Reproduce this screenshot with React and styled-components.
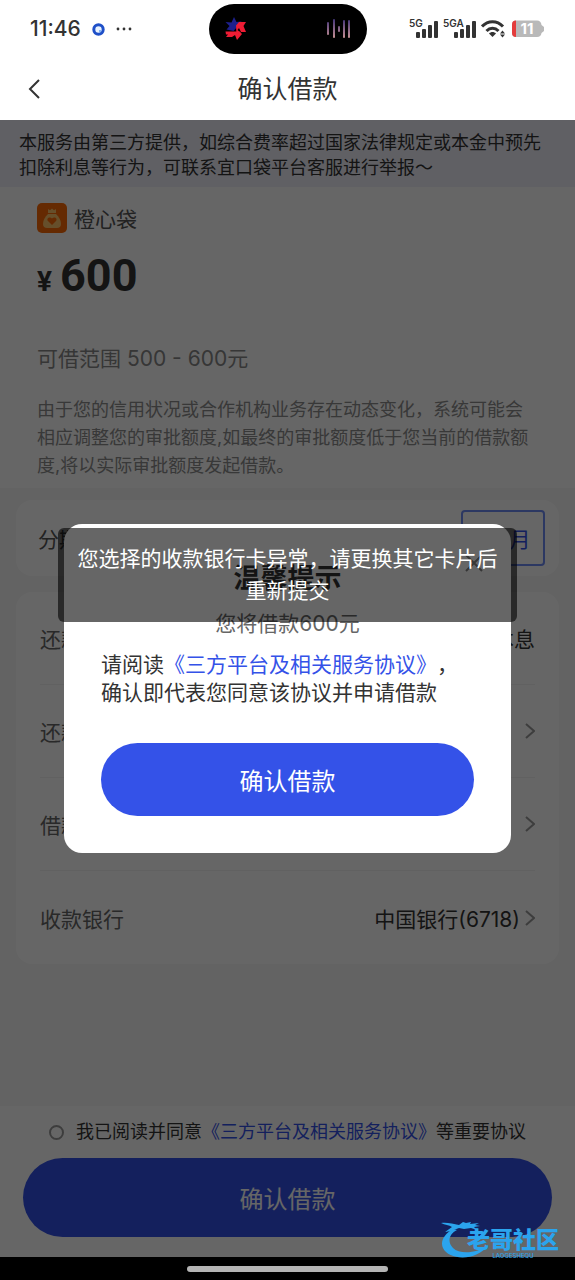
import React from 'react';
import styled, { createGlobalStyle } from 'styled-components';

const GlobalStyle = createGlobalStyle`
  *, *::before, *::after { box-sizing: border-box; }
  body {
    margin: 0;
    background: #fff;
    color: #333;
    font-family: Inter, "Noto Sans CJK SC", sans-serif;
    font-size: 21px;
    text-spacing-trim: space-all;
  }
  button, input { font: inherit; margin: 0; }
  h1, h2, p { margin: 0; }
  svg { display: block; flex: none; }
`;

const Screen = styled.div`
  position: relative;
  min-height: 100vh;
  display: flex;
  flex-direction: column;
`;

const StatusBar = styled.div`
  height: 58px;
  padding: 0 30px;
  display: grid;
  grid-template-columns: 1fr auto 1fr;
  align-items: center;
`;

const StatusLeft = styled.div`
  display: flex;
  align-items: center;
  gap: 11px;
`;

const Time = styled.span`
  font-size: 21px;
  line-height: 28px;
  font-weight: 500;
`;

const StatusRight = styled.div`
  display: flex;
  align-items: center;
  justify-content: flex-end;
  gap: 5px;
`;

const Island = styled.div`
  width: 158px;
  height: 50px;
  padding: 0 15px;
  border-radius: 25px;
  background: #000;
  display: flex;
  align-items: center;
  justify-content: space-between;
`;

const TitleBar = styled.header`
  height: 62px;
  padding: 0 24px;
  display: grid;
  grid-template-columns: 48px 1fr 48px;
  align-items: center;
`;

const IconButton = styled.button`
  padding: 0;
  border: 0;
  background: none;
  display: flex;
  color: #333;
`;

const PageTitle = styled.h1`
  font-size: 25px;
  line-height: 36px;
  font-weight: 400;
  text-align: center;
`;

const Stage = styled.div`
  position: relative;
  flex: 1;
  display: flex;
  flex-direction: column;
`;

const Page = styled.main`
  flex: 1;
  display: flex;
  flex-direction: column;
  background: #f7f7f7;
`;

const Notice = styled.p`
  padding: 10px 19px 7px;
  background: #efeff9;
  font-size: 18px;
  line-height: 25px;
`;

const Hero = styled.section`
  padding: 16px 37px 8px;
  background: #fff;
`;

const Brand = styled.div`
  display: flex;
  align-items: center;
  gap: 7px;
  height: 30px;
  color: #555;
`;

const Amount = styled.p`
  display: flex;
  align-items: baseline;
  gap: 8px;
  height: 48px;
  margin-top: 19px;
  line-height: 48px;
  font-family: Roboto, sans-serif;
  font-weight: 700;
  font-size: 45px;
`;

const Currency = styled.span`
  font-size: 28px;
  line-height: 28px;
`;

const Range = styled.p`
  margin-top: 45px;
  line-height: 28px;
  color: #888;
`;

const Description = styled.p`
  margin-top: 23px;
  font-size: 18px;
  line-height: 28px;
  color: #8c8c8c;
`;

const Cards = styled.div`
  flex: 1;
  padding: 12px 16px;
  display: flex;
  flex-direction: column;
  gap: 16px;
`;

const Card = styled.section`
  padding: 0 24px;
  border-radius: 16px;
  background: #fff;
`;

const TermCard = styled(Card)`
  height: 76px;
  padding: 0 14px 0 22px;
  display: flex;
  align-items: center;
  justify-content: space-between;
  color: #555;
`;

const TermButton = styled.button`
  width: 84px;
  height: 56px;
  padding: 0;
  border: 2px solid #6f8cf5;
  border-radius: 4px;
  background: #fff;
  color: #3452e8;
`;

const Row = styled.div`
  height: 93px;
  display: flex;
  align-items: center;
  justify-content: space-between;
  border-bottom: 1px solid #f2f2f2;
  color: #666;

  &:last-child { border-bottom: 0; }
`;

const RowValue = styled.span`
  display: flex;
  align-items: center;
  gap: 5px;
  color: #333;
`;

const Footer = styled.footer`
  padding: 12px 23px 20px;
  background: #fff;
`;

const Agree = styled.label`
  display: flex;
  align-items: center;
  justify-content: center;
  gap: 12px;
  margin-bottom: 12px;
  font-size: 18px;
  line-height: 28px;
`;

const Radio = styled.input`
  appearance: none;
  flex: none;
  width: 15px;
  height: 15px;
  border: 2px solid #999;
  border-radius: 50%;
`;

const Link = styled.a`
  color: #3452e8;
  text-decoration: none;
`;

const PrimaryButton = styled.button`
  display: block;
  width: 100%;
  height: ${(p) => (p.$large ? 79 : 73)}px;
  padding: 0;
  border: 0;
  border-radius: 40px;
  background: #3452e8;
  color: #fff;
  font-size: 24px;
`;

const Overlay = styled.div`
  position: absolute;
  inset: 0;
  padding: 0 64px;
  display: flex;
  align-items: center;
  background: rgba(0, 0, 0, 0.6);
`;

const Dialog = styled.section`
  position: relative;
  width: 100%;
  padding: 37px;
  border-radius: 18px;
  background: #fff;
`;

const CloseButton = styled(IconButton)`
  position: absolute;
  top: 30px;
  right: 28px;
`;

const DialogTitle = styled.h2`
  font-size: 27px;
  line-height: 36px;
  font-weight: 700;
  text-align: center;
`;

const DialogSub = styled.p`
  margin-top: 13px;
  line-height: 28px;
  text-align: center;
  color: #666;
`;

const DialogText = styled.p`
  margin: 13px 0 36px;
  line-height: 28px;
`;

const Toast = styled.div`
  position: absolute;
  top: 408px;
  left: 58px;
  right: 58px;
  padding: 15px 16px;
  border-radius: 6px;
  background: rgba(0, 0, 0, 0.6);
  color: #fff;
  line-height: 32px;
  text-align: center;
`;

const NavBar = styled.div`
  height: 23px;
  display: flex;
  align-items: center;
  justify-content: center;
  background: #000;
`;

const NavHandle = styled.div`
  width: 35%;
  height: 6px;
  border-radius: 3px;
  background: #b4b4b4;
`;

const Watermark = styled.div`
  position: absolute;
  right: 16px;
  bottom: 20px;
  display: flex;
  align-items: center;
  color: #2ba4ee;
`;

const WatermarkText = styled.div`
  margin-left: -24px;
  padding-top: 8px;
  font-size: 23px;
  line-height: 24px;
  font-weight: 900;
`;

const WatermarkSub = styled.div`
  font-size: 6px;
  line-height: 8px;
  font-weight: 500;
  text-align: center;
`;

const Signal = ({ label, width }) => (
  <svg width={width} height="22" viewBox={`0 0 ${width} 22`} fill="#333">
    <text x="0" y="9" fontSize="10" fontWeight="600" fontFamily="Inter, sans-serif">{label}</text>
    <g transform={`translate(${width - 22} 0)`}>
      <rect x="0" y="14" width="4" height="6" rx="1" />
      <rect x="6" y="11" width="4" height="9" rx="1" />
      <rect x="12" y="7" width="4" height="13" rx="1" />
      <rect x="18" y="3" width="4" height="17" rx="1" />
    </g>
  </svg>
);

const Wifi = () => (
  <svg width="25" height="20" viewBox="0 0 25 20" fill="none" stroke="#333" strokeWidth="3">
    <path d="M1 7.5C7 1 16 1 22 7.5" />
    <path d="M5.5 12C9 8.3 14 8.3 17.5 12" />
    <path d="M8 14.5c2-2 5-2 7 0L11.5 18z" fill="#333" stroke="none" />
    <path d="M21.5 11.5l2.5 3h-5zM21.5 18.5l2.5-3h-5z" fill="#333" stroke="none" />
  </svg>
);

const Battery = () => (
  <svg width="34" height="18" viewBox="0 0 34 18">
    <path d="M5 0.5h21q4 0 4.500 4.500l2.500 2v4l-2.500 2q-.5 4-4.500 4H5q-4 0-4-4V4.500q0-4 4-4z" fill="#b9b9b9" />
    <path d="M5 0.500v16.500q-4 0-4-4V4.500q0-4 4-4z" fill="#e43c3c" />
    <text x="16" y="14" fontSize="15" fontWeight="700" fill="#fff" textAnchor="middle" fontFamily="Inter, sans-serif">11</text>
  </svg>
);

const StarLogo = () => (
  <svg width="24" height="26" viewBox="0 0 24 26">
    <path d="M10 1l2.500 5 5-.5-4 5-4 4.500-7-1.500 3-3.500-4-4 6 .5z" fill="#1d1f8c" />
    <path d="M12 9.500l3-3.500 7 0-2.500 4 2.500 6h-5l-2-4-1.500 2 4 3.500-5 1z" fill="#ee1c34" />
    <path d="M1.500 15.500h14l2.500 2.500-5 6-2-5-3 2H2l2-2.500H2z" fill="#ee1c34" />
  </svg>
);

const Wave = () => (
  <svg width="26" height="22" viewBox="0 0 26 22">
    <defs>
      <linearGradient id="wave" x1="0" y1="0" x2="0" y2="22" gradientUnits="userSpaceOnUse">
        <stop offset="0" stopColor="#3b2f78" />
        <stop offset="1" stopColor="#d59a96" />
      </linearGradient>
    </defs>
    <g fill="url(#wave)">
      <rect x="1" y="4" width="2" height="13" rx="1" />
      <rect x="7" y="1" width="2" height="19" rx="1" />
      <rect x="12" y="8" width="2" height="6" rx="1" />
      <rect x="17" y="2" width="2" height="18" rx="1" />
      <rect x="22" y="2" width="2" height="18" rx="1" />
    </g>
  </svg>
);

const BagLogo = () => (
  <svg width="30" height="30" viewBox="0 0 30 30">
    <rect width="30" height="30" rx="5" fill="#fd6a05" />
    <path d="M11 6l2 1.200 2-1.700 2 1.700 2-1.200v4h-8z" fill="#ffc56b" />
    <path d="M11 11h8c3 3 5 6 5 10 0 2.500-1.500 4-4 4H10c-2.500 0-4-1.500-4-4 0-4 2-7 5-10z" fill="#ffc56b" />
    <path d="M15 22l-4-4c-2-2.500 1.500-5 4-2.500 2.500-2.500 6 0 4 2.500z" fill="#fd6a05" />
  </svg>
);

const Chevron = () => (
  <svg width="10" height="16" viewBox="0 0 10 16" fill="none" stroke="#999" strokeWidth="2">
    <path d="M1 1l8 7-8 7" />
  </svg>
);

const Dragon = () => (
  <svg width="50" height="38" viewBox="0 0 50 38" fill="currentColor">
    <path d="M12 8C3 13-1 21 2 27c6 13 35 13 45-3-10 8-28 10-35 3C6 21 8 13 16 9z" />
    <path d="M0 2c6-1 12 1 18 2l4-3 3 1 5-1-1 2 9-1-4 2 5 1-6 1 3 3-6-2-7 1-5-1-8 3-6 1 7-5C8 4 4 4 0 2z" />
  </svg>
);

export default function App() {
  return (
    <>
      <GlobalStyle />
      <Screen>
        <StatusBar>
          <StatusLeft>
            <Time>11:46</Time>
            <svg width="13" height="13" viewBox="0 0 13 13">
              <circle cx="6.500" cy="6.500" r="4.700" fill="#e9f3ff" stroke="#1f50c8" strokeWidth="3" />
              <circle cx="8" cy="8" r="1" fill="#62a2f5" />
            </svg>
            <svg width="16" height="4" viewBox="0 0 16 4" fill="#333">
              <circle cx="2" cy="2" r="1.400" />
              <circle cx="8" cy="2" r="1.400" />
              <circle cx="14" cy="2" r="1.400" />
            </svg>
          </StatusLeft>
          <Island>
            <StarLogo />
            <Wave />
          </Island>
          <StatusRight>
            <Signal label="5G" width={29} />
            <Signal label="5GA" width={33} />
            <Wifi />
            <Battery />
          </StatusRight>
        </StatusBar>
        <TitleBar>
          <IconButton aria-label="返回">
            <svg width="20" height="20" viewBox="0 0 20 20" fill="none" stroke="currentColor" strokeWidth="2">
              <path d="M15 1L6 10l9 9" />
            </svg>
          </IconButton>
          <PageTitle>确认借款</PageTitle>
        </TitleBar>

        <Stage>
          <Page>
            <Notice>
              本服务由第三方提供，如综合费率超过国家法律规定或本金中预先扣除利息等行为，可联系宜口袋平台客服进行举报～
            </Notice>
            <Hero>
              <Brand>
                <BagLogo />
                橙心袋
              </Brand>
              <Amount>
                <Currency>¥</Currency>600
              </Amount>
              <Range>可借范围 500 - 600元</Range>
              <Description>
                由于您的信用状况或合作机构业务存在动态变化，系统可能会
                <br />
                相应调整您的审批额度,如最终的审批额度低于您当前的借款额
                <br />
                度,将以实际审批额度发起借款。
              </Description>
            </Hero>
            <Cards>
              <TermCard>
                分期数
                <TermButton>3个月</TermButton>
              </TermCard>
              <Card>
                <Row>
                  还款方式
                  <RowValue>到期还本息</RowValue>
                </Row>
                <Row>
                  还款计划
                  <Chevron />
                </Row>
                <Row>
                  借款用途
                  <Chevron />
                </Row>
                <Row>
                  收款银行
                  <RowValue>
                    中国银行(6718)
                    <Chevron />
                  </RowValue>
                </Row>
              </Card>
            </Cards>
            <Footer>
              <Agree>
                <Radio type="radio" name="agree" />
                <span>
                  我已阅读并同意<Link href="#agreement">《三方平台及相关服务协议》</Link>等重要协议
                </span>
              </Agree>
              <PrimaryButton $large>确认借款</PrimaryButton>
            </Footer>
          </Page>

          <Overlay>
            <Dialog role="dialog" aria-labelledby="dialog-title">
              <DialogTitle id="dialog-title">温馨提示</DialogTitle>
              <CloseButton aria-label="关闭">
                <svg width="18" height="18" viewBox="0 0 18 18" fill="none" stroke="#888" strokeWidth="2">
                  <path d="M1 1l16 16M17 1L1 17" />
                </svg>
              </CloseButton>
              <DialogSub>您将借款600元</DialogSub>
              <DialogText>
                请阅读<Link href="#agreement">《三方平台及相关服务协议》</Link>，
                <br />
                确认即代表您同意该协议并申请借款
              </DialogText>
              <PrimaryButton>确认借款</PrimaryButton>
            </Dialog>
          </Overlay>
          <Toast role="alert">您选择的收款银行卡异常，请更换其它卡片后重新提交</Toast>
        </Stage>

        <NavBar>
          <NavHandle />
        </NavBar>
        <Watermark>
          <Dragon />
          <WatermarkText>
            老哥社区
            <WatermarkSub>LAOGESHEQU</WatermarkSub>
          </WatermarkText>
        </Watermark>
      </Screen>
    </>
  );
}
